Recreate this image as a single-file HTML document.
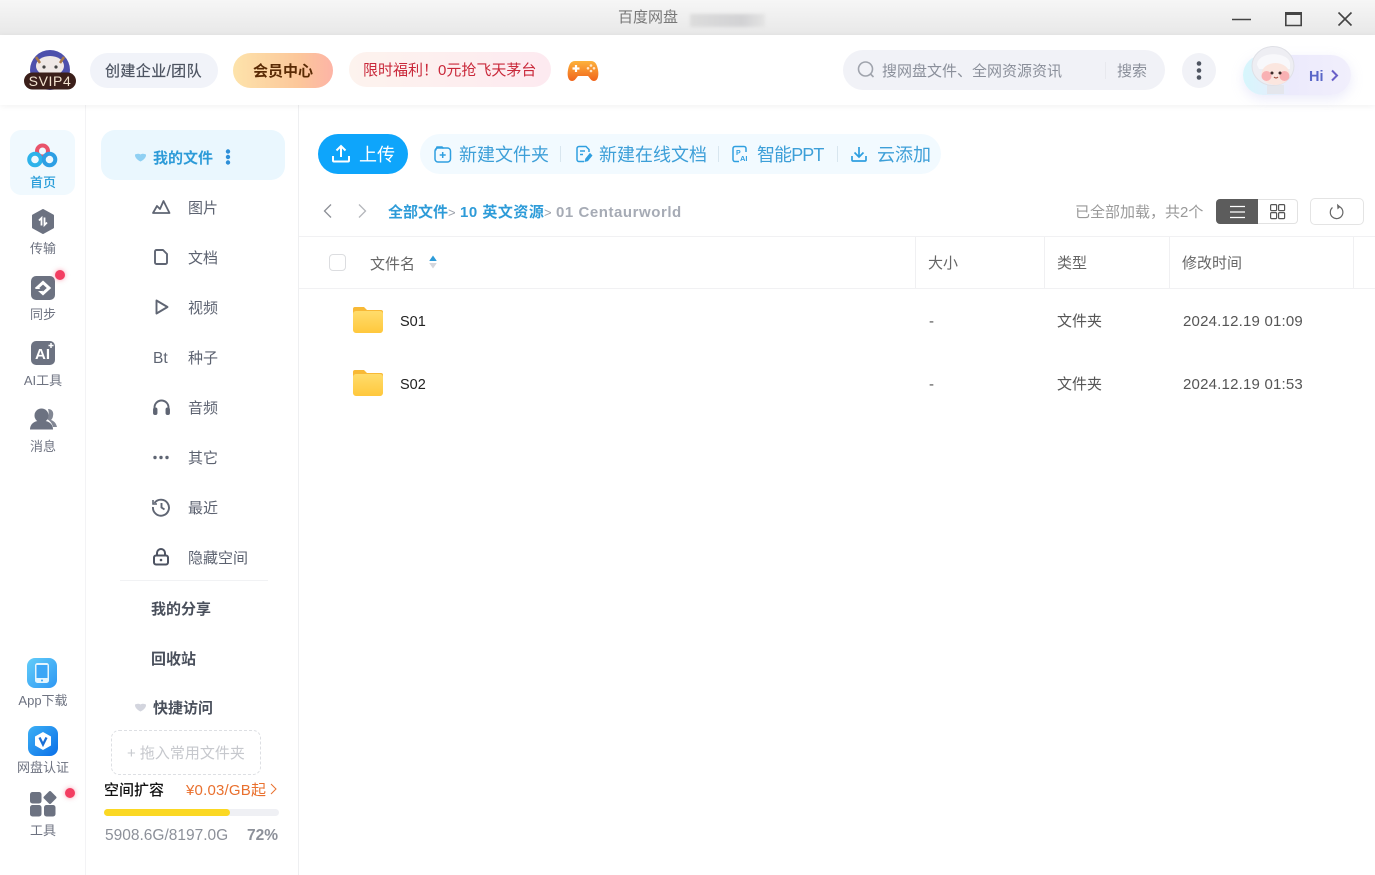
<!DOCTYPE html>
<html lang="zh"><head><meta charset="utf-8"><title>百度网盘</title>
<style>
*{box-sizing:border-box}
html,body{margin:0;padding:0;width:1375px;height:875px;overflow:hidden;background:#fff}
body{font-family:"Liberation Sans","Noto Sans CJK SC",sans-serif;position:relative;color:#454d5a}
.a{position:absolute}
.t{position:absolute;white-space:nowrap;line-height:20px;font-size:15px;margin-top:3px}
svg{position:absolute;overflow:visible}
.nav{color:#6d7280;font-size:13px;width:86px;left:0;text-align:center}
.side{left:188px;color:#5c6270;font-size:15px}
.b{font-weight:700;color:#4a505c;font-size:15px}
.tb{color:#3d9fd8;font-size:18px;line-height:24px}
.sep{position:absolute;width:1px;height:16px;background:#d8e6ef;top:146px}
.th{color:#666;font-size:15px}
.td{color:#555;font-size:15px}
</style></head><body>

<!-- title bar -->
<div class="a" style="left:0;top:0;width:1375px;height:35px;background:linear-gradient(#f6f6f6,#e8e8e8)"></div>
<div class="t" style="left:618px;top:5px;color:#777;font-size:15px">百度网盘</div>
<div class="a" style="left:690px;top:14px;width:75px;height:13px;background:linear-gradient(90deg,#dcdcdc,#d2d2d4 70%,#e4e4e4);filter:blur(1.5px)"></div>
<svg style="left:0;top:0" width="1375" height="35" fill="none" stroke="#444" stroke-width="1.600">
<path d="M1232 19.500h19"/><path d="M1285.800 13h15.400v12.500h-15.400z"/><path d="M1285 13.500h17" stroke-width="3"/><path d="M1338.500 12.500l13 13M1351.500 12.500l-13 13"/></svg>

<!-- header -->
<div class="a" style="left:0;top:35px;width:1375px;height:70px;background:#fff;box-shadow:0 1px 6px rgba(0,0,0,.06);z-index:1"></div>
<div class="a" style="z-index:2;left:0;top:0;width:1375px;height:105px">
<svg style="left:24px;top:48px" width="52" height="44">
<circle cx="26" cy="22" r="20" fill="#4d50ac"/>
<ellipse cx="26" cy="18" rx="14" ry="10" fill="#efe8e6"/>
<path d="M12 9l4 6M40 9l-4 6" stroke="#a87848" stroke-width="2.500"/>
<circle cx="20" cy="19" r="1.600" fill="#444"/><circle cx="32" cy="19" r="1.600" fill="#444"/>
<rect x="0" y="24.500" width="52" height="17" rx="8.500" fill="#3b1f1a"/>
<text x="26" y="38" font-size="14" letter-spacing=".6" fill="#f3e3cf" text-anchor="middle" font-family="Liberation Sans">SVIP4</text></svg>

<div class="a" style="left:90px;top:53px;width:128px;height:35px;border-radius:18px;background:#f1f3f9"></div>
<div class="t" style="left:105px;top:59px;color:#4c5361;font-size:15px;letter-spacing:.4px;-webkit-text-stroke:.2px #4c5361">创建企业/团队</div>
<div class="a" style="left:233px;top:53px;width:100px;height:35px;border-radius:18px;background:linear-gradient(90deg,#fde3ab,#fcc79a 65%,#fdb4a6)"></div>
<div class="t" style="left:253px;top:59px;color:#5a2a04;font-size:15px;font-weight:700">会员中心</div>
<div class="a" style="left:349px;top:52px;width:202px;height:35px;border-radius:18px;background:linear-gradient(90deg,#fdf3ee,#fdeaf0)"></div>
<div class="t" style="left:363px;top:58px;color:#c9283a;font-size:15px">限时福利！0元抢飞天茅台</div>
<svg style="left:567px;top:60px" width="33" height="22">
<defs><linearGradient id="g" x1="0" y1="0" x2="0" y2="1"><stop offset="0" stop-color="#fdb23c"/><stop offset="1" stop-color="#f0641c"/></linearGradient></defs>
<path d="M8 1h16c4 0 6 3 7 9 1 5 0 11-4 11-3 0-4-3-6-5H11c-2 2-3 5-6 5-4 0-5-6-4-11C2 4 4 1 8 1z" fill="url(#g)"/>
<path d="M5.500 8.500h7M9 5v7" stroke="#fff" stroke-width="2.200"/><circle cx="24" cy="5.500" r="1.300" fill="#ffe6c8"/><circle cx="24" cy="11" r="1.300" fill="#ffe6c8"/><circle cx="21" cy="8.300" r="1.300" fill="#ffe6c8"/><circle cx="27" cy="8.300" r="1.300" fill="#ffe6c8"/></svg>

<div class="a" style="left:843px;top:50px;width:322px;height:40px;border-radius:20px;background:#f1f2f7"></div>
<svg style="left:856px;top:60px" width="20" height="20" fill="none" stroke="#a0a4ad" stroke-width="1.600"><circle cx="9.500" cy="9" r="7"/><path d="M14.500 14l3 3"/></svg>
<div class="t" style="left:882px;top:59px;color:#8a8f9a;font-size:15px">搜网盘文件、全网资源资讯</div>
<div class="a" style="left:1105px;top:62px;width:1px;height:17px;background:#e8e9ee"></div>
<div class="t" style="left:1117px;top:59px;color:#8a8f9a;font-size:15px">搜索</div>
<div class="a" style="left:1182px;top:53px;width:34px;height:35px;border-radius:50%;background:#f1f2f7"></div>
<svg style="left:1182px;top:53px" width="34" height="35" fill="#4f5561"><circle cx="17" cy="10.500" r="2.300"/><circle cx="17" cy="17.500" r="2.300"/><circle cx="17" cy="24.500" r="2.300"/></svg>

<div class="a" style="left:1243px;top:55px;width:108px;height:40px;border-radius:20px;background:linear-gradient(90deg,#d6f6fc,#eceafc 45%,#f1effc);box-shadow:0 4px 12px rgba(190,190,240,.3)"></div>
<svg style="left:1250px;top:45px" width="52" height="52">
<path d="M17 40h17v9H17z" fill="#e4e6ec"/>
<ellipse cx="23" cy="21" rx="21" ry="19.500" fill="#eeeef3" stroke="#dfe0e6"/>
<path d="M7 20C7 6 38 6 40 18L40 24H9z" fill="#f8f8fb"/>
<ellipse cx="25.500" cy="29" rx="14" ry="11" fill="#fbe6df"/>
<circle cx="16.500" cy="31" r="5" fill="#f9b1b3"/><circle cx="34.500" cy="31" r="5" fill="#f9b1b3"/>
<circle cx="22" cy="28" r="1.500" fill="#3c2a28"/><circle cx="30" cy="28" r="1.500" fill="#3c2a28"/>
<path d="M24 32q2 2 4 0" stroke="#a2503f" stroke-width="1.200" fill="none"/></svg>
<div class="t" style="left:1309px;top:64px;color:#5a67c8;font-size:14.500px;font-weight:700">Hi</div>
<svg style="left:1330px;top:69px" width="10" height="13" fill="none" stroke="#6a5fc8" stroke-width="2"><path d="M2 1.500l5 5-5 5"/></svg>
</div>

<!-- panel borders -->
<div class="a" style="left:85px;top:105px;width:1px;height:770px;background:#f3f3f5;box-shadow:-2px 0 4px rgba(0,0,0,.02)"></div>
<div class="a" style="left:298px;top:105px;width:1px;height:770px;background:#eeeff1"></div>

<!-- left nav -->
<div class="a" style="left:10px;top:130px;width:65px;height:65px;border-radius:11px;background:#f0f9fe"></div>
<svg style="left:27px;top:143px" width="32" height="26" fill="none" stroke-width="4">
<circle cx="15.500" cy="8" r="5.500" stroke="#e9546b"/><circle cx="8" cy="16.500" r="5.800" stroke="#2eb3ea"/><circle cx="22.500" cy="16.500" r="5.800" stroke="#2e9fe4"/></svg>
<div class="t nav" style="top:170px;color:#2b9ed9;font-weight:500">首页</div>

<svg style="left:31px;top:209px" width="24" height="25"><path d="M12 1l10 5.500v12L12 24 2 18.500v-12z" fill="#6c7281" stroke="#6c7281" stroke-width="2" stroke-linejoin="round"/>
<path d="M10.500 16.500V9L8 11.500M13.500 8.500V16l2.500-2.500" stroke="#fff" stroke-width="1.800" fill="none"/></svg>
<div class="t nav" style="top:236px">传输</div>

<svg style="left:31px;top:276px" width="24" height="24"><rect width="24" height="24" rx="5" fill="#6c7281"/><path d="M12 6.500l6 5.500-6 5.500-6-5.500z" fill="none" stroke="#fff" stroke-width="3"/><path d="M4 13h7v2H4z" fill="#6c7281"/></svg>
<div class="a" style="left:55px;top:270px;width:10px;height:10px;border-radius:50%;background:#f33e62;box-shadow:0 0 5px rgba(243,62,98,.5)"></div>
<div class="t nav" style="top:302px">同步</div>

<svg style="left:31px;top:341px" width="24" height="24"><rect width="24" height="24" rx="5" fill="#6c7281"/><text x="4" y="18" font-size="15" font-weight="700" fill="#fff" font-family="Liberation Sans">AI</text><path d="M20 2v5M17.500 4.500h5" stroke="#fff" stroke-width="1.500"/></svg>
<div class="t nav" style="top:368px">AI工具</div>

<svg style="left:30px;top:408px" width="27" height="22" fill="#6c7281"><path d="M18 1c4 0 6 3 5 7-.3 2-1 3-2 4 3 1 5 3 6 7h-4c-1-4-3-6-6-8 2-3 2-7 1-10z" opacity=".85"/><circle cx="11.500" cy="7.500" r="7"/><path d="M0 21.500c0-6 5-9 11.500-9s11.500 3 11.500 9z"/></svg>
<div class="t nav" style="top:434px">消息</div>

<svg style="left:27px;top:658px" width="30" height="30"><defs><linearGradient id="g2" x1="0" y1="0" x2="1" y2="1"><stop offset="0" stop-color="#62cdf9"/><stop offset="1" stop-color="#2e97f3"/></linearGradient></defs><rect width="30" height="30" rx="8" fill="url(#g2)"/><rect x="8" y="5" width="14" height="20" rx="2.500" fill="#e4f5fe"/><rect x="9.500" y="7" width="11" height="13" fill="#3ba6f6"/><circle cx="15" cy="22.500" r="1" fill="#3ba6f6"/></svg>
<div class="t nav" style="top:688px">App下载</div>

<svg style="left:28px;top:726px" width="30" height="30"><defs><linearGradient id="g3" x1="0" y1="0" x2="1" y2="1"><stop offset="0" stop-color="#3cb0f5"/><stop offset="1" stop-color="#0a6fe8"/></linearGradient></defs><rect width="30" height="30" rx="8" fill="url(#g3)"/><path d="M15 6l8 4.500v9L15 24l-8-4.500v-9z" fill="#fff"/><path d="M11.500 11.500l3.500 7 3.500-7" fill="none" stroke="#1b6fd6" stroke-width="2.300"/></svg>
<div class="t nav" style="top:755px">网盘认证</div>

<svg style="left:30px;top:791px" width="26" height="26" fill="#6c7281"><rect width="11.500" height="11.500" y="1" rx="2.500"/><rect x="15" y="0" width="10" height="10" rx="1.500" transform="rotate(45 20 6.500) translate(0,1.500)"/><rect y="14" width="11.500" height="11.500" rx="2.500"/><rect x="14" y="14" width="11.500" height="11.500" rx="2.500"/></svg>
<div class="a" style="left:65px;top:788px;width:10px;height:10px;border-radius:50%;background:#f33e62;box-shadow:0 0 5px rgba(243,62,98,.5)"></div>
<div class="t nav" style="top:818px">工具</div>

<!-- side menu -->
<div class="a" style="left:101px;top:130px;width:184px;height:50px;border-radius:14px;background:#eaf7fe"></div>
<svg style="left:134px;top:153px" width="13" height="9"><path d="M1 1.500c2-1 4-1 5.500 0 1.500-1 3.500-1 5.500 0 .5 3-3 6-5.500 7C4 7.500.5 4.500 1 1.500z" fill="#8fd0f3"/></svg>
<div class="t" style="left:153px;top:146px;color:#2d9bd8;font-size:15px;font-weight:700">我的文件</div>
<svg style="left:224px;top:149px" width="8" height="16" fill="#2d8fd8"><circle cx="4" cy="2.500" r="2.200"/><circle cx="4" cy="8" r="2.200"/><circle cx="4" cy="13.500" r="2.200"/></svg>

<svg style="left:152px;top:199px" width="19" height="16" fill="none" stroke="#5f6573" stroke-width="1.800" stroke-linejoin="round"><path d="M1 14l4-7 3 3L11.500 2 17.500 14z"/></svg>
<div class="t side" style="top:196px">图片</div>
<svg style="left:154px;top:249px" width="14" height="16" fill="none" stroke="#5f6573" stroke-width="1.900" stroke-linejoin="round"><path d="M2.500 1H9l4 4v8.500a1.500 1.500 0 0 1-1.500 1.500h-9A1.500 1.500 0 0 1 1 13.500v-11A1.500 1.500 0 0 1 2.500 1z"/></svg>
<div class="t side" style="top:246px">文档</div>
<svg style="left:155px;top:299px" width="14" height="16" fill="none" stroke="#5f6573" stroke-width="1.900" stroke-linejoin="round"><path d="M1.500 1.500l11 6.500-11 6.500z"/></svg>
<div class="t side" style="top:296px">视频</div>
<div class="t" style="left:153px;top:346px;color:#5f6573;font-size:15.500px">Bt</div>
<div class="t side" style="top:346px">种子</div>
<svg style="left:153px;top:399px" width="17" height="16" fill="none" stroke="#5f6573" stroke-width="1.900"><path d="M1.500 10V8.500a7 7 0 0 1 14 0V10"/><rect x="1" y="9.500" width="2.500" height="5.500" rx="1" fill="#5f6573"/><rect x="13.500" y="9.500" width="2.500" height="5.500" rx="1" fill="#5f6573"/></svg>
<div class="t side" style="top:396px">音频</div>
<svg style="left:153px;top:455px" width="17" height="5" fill="#5f6573"><circle cx="2" cy="2.500" r="1.700"/><circle cx="8" cy="2.500" r="1.700"/><circle cx="14" cy="2.500" r="1.700"/></svg>
<div class="t side" style="top:446px">其它</div>
<svg style="left:152px;top:498px" width="18" height="18" fill="none" stroke="#5f6573" stroke-width="1.900"><path d="M2.500 5A8 8 0 1 1 1 9"/><path d="M1 2v4h4" stroke-width="1.600"/><path d="M9.500 5v4.500l3 2"/></svg>
<div class="t side" style="top:496px">最近</div>
<svg style="left:153px;top:548px" width="16" height="18" fill="none" stroke="#4d5362" stroke-width="2"><rect x="1" y="7.500" width="14" height="9" rx="2"/><path d="M4 7.500V5a4 4 0 0 1 8 0v2.500"/><circle cx="8" cy="12" r="1.300" fill="#4d5362" stroke="none"/></svg>
<div class="t side" style="top:546px">隐藏空间</div>
<div class="a" style="left:120px;top:580px;width:148px;height:1px;background:#f1f2f4"></div>
<div class="t b" style="left:151px;top:597px">我的分享</div>
<div class="t b" style="left:151px;top:647px">回收站</div>
<svg style="left:134px;top:703px" width="13" height="9"><path d="M1 1.500c2-1 4-1 5.500 0 1.500-1 3.500-1 5.500 0 .5 3-3 6-5.500 7C4 7.500.5 4.500 1 1.500z" fill="#d3d5de"/></svg>
<div class="t b" style="left:153px;top:696px">快捷访问</div>
<div class="a" style="left:111px;top:730px;width:150px;height:45px;border:1px dashed #dddfe3;border-radius:8px"></div>
<div class="t" style="left:127px;top:741px;color:#c6c8cd;font-size:15px">+ 拖入常用文件夹</div>
<div class="t" style="left:104px;top:778px;color:#111;font-size:15px;font-weight:500">空间扩容</div>
<div class="t" style="left:186px;top:778px;color:#e9702e;font-size:15px;letter-spacing:.2px">¥0.03/GB起</div>
<svg style="left:270px;top:783px" width="7" height="12" fill="none" stroke="#e9702e" stroke-width="1"><path d="M1 1l5 5-5 5"/></svg>
<div class="a" style="left:104px;top:809px;width:175px;height:7px;border-radius:4px;background:#eff0f4"></div>
<div class="a" style="left:104px;top:809px;width:126px;height:7px;border-radius:4px;background:#fbd823"></div>
<div class="t" style="left:105px;top:823px;color:#8c9099;font-size:15.500px">5908.6G/8197.0G</div>
<div class="t" style="left:247px;top:823px;color:#8c9099;font-size:15.500px;font-weight:700">72%</div>

<!-- toolbar -->
<div class="a" style="left:318px;top:134px;width:90px;height:40px;border-radius:20px;background:#0ea5fb"></div>
<svg style="left:332px;top:144px" width="18" height="19" fill="none" stroke="#fff" stroke-width="2"><path d="M9 13V2M4.500 6.500L9 2l4.500 4.500M1 12v4.500a1 1 0 0 0 1 1h14a1 1 0 0 0 1-1V12"/></svg>
<div class="t" style="left:359px;top:140px;color:#fff;font-size:18px;line-height:24px">上传</div>
<div class="a" style="left:420px;top:134px;width:521px;height:40px;border-radius:20px;background:#f2faff"></div>
<svg style="left:434px;top:146px" width="18" height="17" fill="none" stroke="#2f9fe0" stroke-width="1.500"><rect x="1" y="2" width="15.500" height="14" rx="3"/><path d="M1.500 4.500L3 1h5l1.500 1.500"/><path d="M8.700 6v6M5.700 9h6"/></svg>
<div class="t tb" style="left:459px;top:140px">新建文件夹</div>
<div class="sep" style="left:560px"></div>
<svg style="left:576px;top:145px" width="17" height="18" fill="none" stroke="#2f9fe0" stroke-width="1.500"><path d="M8 16.500H3a2 2 0 0 1-2-2v-11a2 2 0 0 1 2-2h7l3 3V7"/><path d="M4 6h5M4 9.500h3"/><path d="M10 14l4-5 1.500 1.500-4 5-2 .5z" fill="#2f9fe0"/></svg>
<div class="t tb" style="left:599px;top:140px">新建在线文档</div>
<div class="sep" style="left:718px"></div>
<svg style="left:732px;top:145px" width="17" height="18" fill="none" stroke="#2f9fe0" stroke-width="1.500"><path d="M7 16.500H3a2 2 0 0 1-2-2v-11a2 2 0 0 1 2-2h9a2 2 0 0 1 2 2V7"/><text x="4" y="10" font-size="7" fill="#2f9fe0" stroke="none" font-weight="700" font-family="Liberation Sans">P</text><text x="8" y="16" font-size="7.500" fill="#2f9fe0" stroke="none" font-weight="700" font-family="Liberation Sans">AI</text></svg>
<div class="t tb" style="left:757px;top:140px;letter-spacing:-.9px">智能PPT</div>
<div class="sep" style="left:837px"></div>
<svg style="left:851px;top:146px" width="16" height="16" fill="none" stroke="#2f9fe0" stroke-width="1.700"><path d="M8 1v10M3.500 6.500L8 11l4.500-4.500M1 10v4a1 1 0 0 0 1 1h12a1 1 0 0 0 1-1v-4"/></svg>
<div class="t tb" style="left:877px;top:140px">云添加</div>

<!-- breadcrumb -->
<svg style="left:322px;top:203px" width="50" height="16" fill="none" stroke="#8c8f96" stroke-width="1.300"><path d="M9 1.500L2.500 8 9 14.500"/><path d="M37 1.500L43.500 8 37 14.500" stroke="#b4b6bb"/></svg>
<div class="t" style="left:388px;top:200px;color:#2d9bd8;font-size:15px;font-weight:700">全部文件</div>
<div class="t" style="left:448px;top:200px;color:#9aa0aa;font-size:13px">&gt;</div>
<div class="t" style="left:460px;top:200px;color:#2d9bd8;font-size:15px;font-weight:700;letter-spacing:.5px">10 英文资源</div>
<div class="t" style="left:544px;top:200px;color:#9aa0aa;font-size:13px">&gt;</div>
<div class="t" style="left:556px;top:200px;color:#a6abb5;font-size:15px;font-weight:700;letter-spacing:.55px">01 Centaurworld</div>

<div class="t" style="left:1075px;top:200px;color:#999;font-size:15px">已全部加载，共2个</div>
<div class="a" style="left:1216px;top:199px;width:42px;height:25px;background:#5c5c5c;border-radius:4px 0 0 4px"></div>
<div class="a" style="left:1258px;top:199px;width:40px;height:25px;border:1px solid #e2e2e2;border-left:0;border-radius:0 4px 4px 0"></div>
<svg style="left:1230px;top:205px" width="16" height="14" stroke="#fff" stroke-width="1.300"><path d="M0 1.500h15M0 7h15M0 12.500h15"/></svg>
<svg style="left:1270px;top:204px" width="16" height="16" fill="none" stroke="#555" stroke-width="1.200"><rect x=".6" y=".6" width="6" height="6" rx="1"/><rect x="8.600" y=".6" width="6" height="6" rx="1"/><rect x=".6" y="8.600" width="6" height="6" rx="1"/><rect x="8.600" y="8.600" width="6" height="6" rx="1"/></svg>
<div class="a" style="left:1310px;top:198px;width:54px;height:27px;border:1px solid #e4e4e4;border-radius:5px"></div>
<svg style="left:1329px;top:203px" width="16" height="17" fill="none" stroke="#666" stroke-width="1.200"><path d="M10.500 3.700A6.300 6.300 0 1 1 3.500 4.500"/><path d="M8 .8l3.500 2.900L8.500 6.500" fill="#666" stroke="none"/></svg>

<!-- table -->
<div class="a" style="left:299px;top:236px;width:1076px;height:1px;background:#f1f1f3"></div>
<div class="a" style="left:299px;top:288px;width:1076px;height:1px;background:#f1f1f3"></div>
<div class="a" style="left:915px;top:237px;width:1px;height:51px;background:#f0f0f2"></div>
<div class="a" style="left:1044px;top:237px;width:1px;height:51px;background:#f0f0f2"></div>
<div class="a" style="left:1169px;top:237px;width:1px;height:51px;background:#f0f0f2"></div>
<div class="a" style="left:1353px;top:237px;width:1px;height:51px;background:#f0f0f2"></div>
<div class="a" style="left:329px;top:254px;width:17px;height:17px;border:1px solid #dcdde0;border-radius:4px"></div>
<div class="t th" style="left:370px;top:252px">文件名</div>
<svg style="left:429px;top:255px" width="8" height="14"><path d="M4 .5L7.500 5.500v.5h-7v-.5z" fill="#2d9bd8"/><path d="M4 13.500L.5 8.500V8h7v.5z" fill="#d4d6dc"/></svg>
<div class="t th" style="left:928px;top:251px">大小</div>
<div class="t th" style="left:1057px;top:251px">类型</div>
<div class="t th" style="left:1182px;top:251px">修改时间</div>

<svg style="left:352px;top:306px" width="32" height="28"><defs><linearGradient id="f" x1="0" y1="0" x2="0" y2="1"><stop offset="0" stop-color="#ffdc6b"/><stop offset="1" stop-color="#ffc83d"/></linearGradient></defs><path d="M1 3a2 2 0 0 1 2-2h9l3 3h14a2 2 0 0 1 2 2v4H1z" fill="#f8b936"/><rect x="1" y="5" width="30" height="22" rx="3" fill="url(#f)"/></svg>
<div class="t" style="left:400px;top:309px;color:#222;font-size:14.500px">S01</div>
<div class="t td" style="left:929px;top:309px">-</div>
<div class="t td" style="left:1057px;top:309px">文件夹</div>
<div class="t td" style="left:1183px;top:309px;letter-spacing:.2px">2024.12.19 01:09</div>

<svg style="left:352px;top:369px" width="32" height="28"><path d="M1 3a2 2 0 0 1 2-2h9l3 3h14a2 2 0 0 1 2 2v4H1z" fill="#f8b936"/><rect x="1" y="5" width="30" height="22" rx="3" fill="url(#f)"/></svg>
<div class="t" style="left:400px;top:372px;color:#222;font-size:14.500px">S02</div>
<div class="t td" style="left:929px;top:372px">-</div>
<div class="t td" style="left:1057px;top:372px">文件夹</div>
<div class="t td" style="left:1183px;top:372px;letter-spacing:.2px">2024.12.19 01:53</div>
</body></html>
